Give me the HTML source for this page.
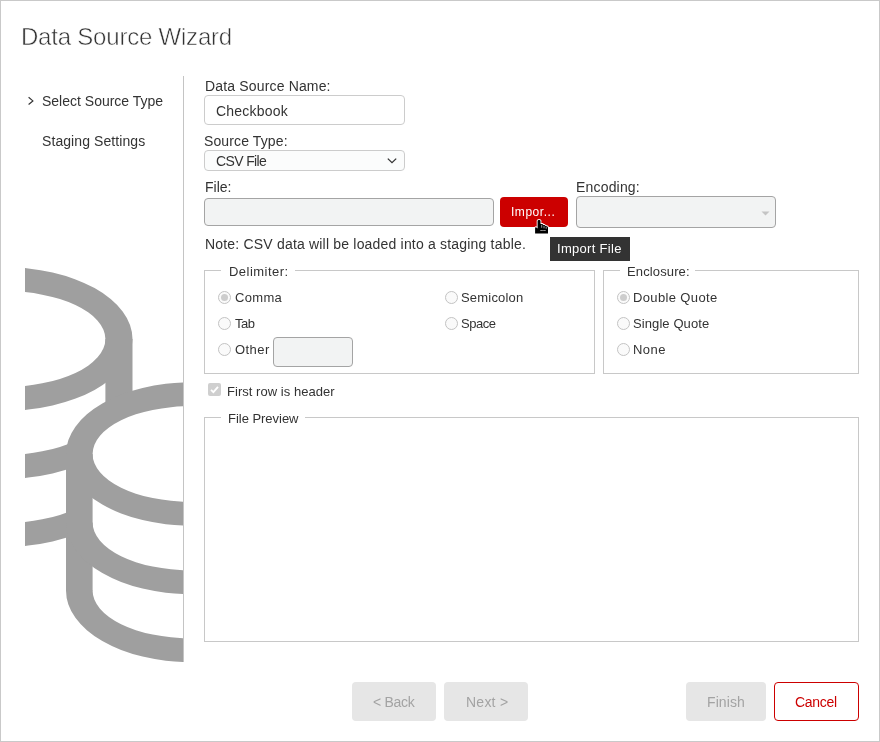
<!DOCTYPE html>
<html lang="en">
<head>
<meta charset="utf-8">
<title>Data Source Wizard</title>
<style>
html,body{margin:0;padding:0;}
body{width:880px;height:742px;position:relative;overflow:hidden;background:#fff;font-family:"Liberation Sans",sans-serif;font-size:14px;color:#333;}
#frame{position:absolute;left:0;top:0;width:878px;height:740px;border:1px solid #c9c9c9;}
.t{position:absolute;white-space:nowrap;line-height:20px;height:20px;will-change:transform;}
.thin{-webkit-text-stroke:0.55px #fff;}
#vline{position:absolute;left:183px;top:76px;width:1px;height:586px;background:#c4c4c4;}
#db{position:absolute;left:25px;top:265px;width:158px;height:397px;}
.box{position:absolute;box-sizing:border-box;border:1px solid #ccc;border-radius:4px;background:#fff;}
.dis{border-color:#a4a4a4;background:#f2f3f3;}
.fs{position:absolute;box-sizing:border-box;border:1px solid #c8c8c8;}
.lg{position:absolute;background:#fff;height:4px;top:-2px;}
.r{position:absolute;box-sizing:border-box;width:13px;height:13px;border-radius:50%;border:1px solid #c3c3c3;background:#fafafa;}
.r.on::after{content:"";position:absolute;left:2px;top:2px;width:7px;height:7px;border-radius:50%;background:#cdcdcd;}
.btn{position:absolute;box-sizing:border-box;border-radius:4px;height:39px;top:682px;}
.btn.d{background:#e6e6e6;}
</style>
</head>
<body>
<div id="frame"></div>
<div class="t thin" style="left:21px;top:27px;font-size:24px;color:#333;letter-spacing:-0.21px;">Data Source Wizard</div>

<!-- sidebar -->
<svg style="position:absolute;left:27px;top:96px" width="8" height="11" viewBox="0 0 8 11"><path d="M1.600 1.300 L5.900 4.900 L1.600 8.500" fill="none" stroke="#333" stroke-width="1.150"/></svg>
<div class="t" style="left:42px;top:91px;font-size:14px;color:#333;">Select Source Type</div>
<div class="t" style="left:42px;top:131px;font-size:14px;color:#333;letter-spacing:0.08px;">Staging Settings</div>
<div id="vline"></div>

<svg id="db" viewBox="25 265 158 397">
  <g fill="#9f9f9f">
    <!-- back cylinder -->
    <path fill-rule="evenodd" d="M-126.5 339 a129.500 72 0 1 0 259 0 a129.500 72 0 1 0 -259 0 Z M-99.400 339 a102.400 48 0 1 0 204.800 0 a102.400 48 0 1 0 -204.800 0 Z"/>
    <rect x="105.400" y="339" width="27.100" height="90"/>
    <path d="M-99.400 407 a102.400 48 0 0 0 204.800 0 h27.100 a129.500 72 0 0 1 -259 0 Z"/>
    <path d="M-99.400 475 a102.400 48 0 0 0 204.800 0 h27.100 a129.500 72 0 0 1 -259 0 Z"/>
  </g>
  <!-- front cylinder silhouette (inset slightly so no seams show) -->
  <path fill="#fff" d="M76 454 a114 61.500 0 0 1 228 0 v136 a114 61.500 0 0 1 -228 0 Z"/>
  <g fill="#9f9f9f">
    <path fill-rule="evenodd" d="M66 454 a124 71.500 0 1 0 248 0 a124 71.500 0 1 0 -248 0 Z M92.600 454 a97.400 47.750 0 1 0 194.800 0 a97.400 47.750 0 1 0 -194.800 0 Z"/>
    <rect x="66" y="454" width="26.600" height="137"/>
    <path d="M92.600 522.500 a97.400 47.750 0 0 0 194.800 0 h26.600 a124 71.500 0 0 1 -248 0 Z"/>
    <path d="M92.600 590.500 a97.400 47.750 0 0 0 194.800 0 h26.600 a124 71.500 0 0 1 -248 0 Z"/>
  </g>
</svg>

<!-- form -->
<div class="t" style="left:205px;top:76px;font-size:14px;color:#333;letter-spacing:0.16px;">Data Source Name:</div>
<div class="box" style="left:204px;top:95px;width:201px;height:30px;"></div>
<div class="t" style="left:216px;top:101px;font-size:14px;color:#333;letter-spacing:0.22px;">Checkbook</div>

<div class="t" style="left:204px;top:131px;font-size:14px;color:#333;letter-spacing:0.12px;">Source Type:</div>
<div class="box" style="left:204px;top:150px;width:201px;height:21px;background:#fbfcfc;"></div>
<div class="t" style="left:216px;top:151px;font-size:14px;color:#333;letter-spacing:-0.63px;">CSV File</div>
<svg style="position:absolute;left:386px;top:156px" width="12" height="9" viewBox="0 0 12 9"><path d="M1.8 2.6 L6 6.6 L10.200 2.600" fill="none" stroke="#333" stroke-width="1.3"/></svg>

<div class="t" style="left:205px;top:177px;font-size:14px;color:#333;letter-spacing:0.01px;">File:</div>
<div class="box dis" style="left:204px;top:198px;width:290px;height:28px;"></div>
<div class="btn" style="left:500px;top:197px;width:68px;height:30px;background:#cc0000;"></div>
<div class="t" style="left:511px;top:202px;font-size:12px;color:#fff;letter-spacing:0.54px;">Impor...</div>
<div class="t" style="left:576px;top:177px;font-size:14px;color:#333;letter-spacing:0.18px;">Encoding:</div>
<div class="box dis" style="left:576px;top:196px;width:200px;height:32px;"></div>
<svg style="position:absolute;left:760.500px;top:211px" width="9" height="5" viewBox="0 0 9 5"><path d="M0.500 0.500 H8.500 L4.500 4.500 Z" fill="#c4c4c4"/></svg>

<div class="t" style="left:205px;top:234px;font-size:14px;color:#333;letter-spacing:0.19px;">Note: CSV data will be loaded into a staging table.</div>

<!-- tooltip -->
<div style="position:absolute;left:550px;top:237px;width:80px;height:24px;background:#333;"></div>
<div class="t" style="left:557px;top:239px;font-size:13px;color:#fff;letter-spacing:0.3px;">Import File</div>

<!-- delimiter fieldset -->
<div class="fs" style="left:204px;top:270px;width:391px;height:104px;"><div class="lg" style="left:16px;width:74px;"></div></div>
<div class="t" style="left:229px;top:262px;font-size:13px;color:#333;letter-spacing:0.47px;">Delimiter:</div>
<div class="r on" style="left:218px;top:291px;"></div><div class="t" style="left:235px;top:288px;font-size:13px;color:#333;letter-spacing:0.32px;">Comma</div>
<div class="r" style="left:218px;top:317px;"></div><div class="t" style="left:235px;top:314px;font-size:13px;color:#333;letter-spacing:-0.5px;">Tab</div>
<div class="r" style="left:218px;top:343px;"></div><div class="t" style="left:235px;top:340px;font-size:13px;color:#333;letter-spacing:0.43px;">Other</div>
<div class="box dis" style="left:273px;top:337px;width:80px;height:30px;"></div>
<div class="r" style="left:445px;top:291px;"></div><div class="t" style="left:461px;top:288px;font-size:13px;color:#333;letter-spacing:0.19px;">Semicolon</div>
<div class="r" style="left:445px;top:317px;"></div><div class="t" style="left:461px;top:314px;font-size:13px;color:#333;letter-spacing:-0.5px;">Space</div>

<!-- enclosure fieldset -->
<div class="fs" style="left:603px;top:270px;width:256px;height:104px;"><div class="lg" style="left:16px;width:75px;"></div></div>
<div class="t" style="left:627px;top:262px;font-size:13px;color:#333;letter-spacing:0.13px;">Enclosure:</div>
<div class="r on" style="left:617px;top:291px;"></div><div class="t" style="left:633px;top:288px;font-size:13px;color:#333;letter-spacing:0.36px;">Double Quote</div>
<div class="r" style="left:617px;top:317px;"></div><div class="t" style="left:633px;top:314px;font-size:13px;color:#333;letter-spacing:0.09px;">Single Quote</div>
<div class="r" style="left:617px;top:343px;"></div><div class="t" style="left:633px;top:340px;font-size:13px;color:#333;letter-spacing:0.43px;">None</div>

<!-- checkbox -->
<div style="position:absolute;left:208px;top:383px;width:13px;height:13px;border-radius:2px;background:#cfcfcf;"></div>
<svg style="position:absolute;left:208px;top:383px" width="13" height="13" viewBox="0 0 13 13"><path d="M3 6.800 L5.400 9.200 L10 3.800" fill="none" stroke="#fff" stroke-width="1.8"/></svg>
<div class="t" style="left:227px;top:382px;font-size:13px;color:#333;letter-spacing:0.04px;">First row is header</div>

<!-- file preview -->
<div class="fs" style="left:204px;top:417px;width:655px;height:225px;"><div class="lg" style="left:16px;width:84px;"></div></div>
<div class="t" style="left:228px;top:409px;font-size:13px;color:#333;letter-spacing:-0.03px;">File Preview</div>

<!-- buttons -->
<div class="btn d" style="left:352px;width:84px;"></div><div class="t" style="left:373px;top:692px;font-size:14px;color:#a3a3a3;letter-spacing:-0.3px;">&lt; Back</div>
<div class="btn d" style="left:444px;width:84px;"></div><div class="t" style="left:466px;top:692px;font-size:14px;color:#a3a3a3;letter-spacing:0.24px;">Next &gt;</div>
<div class="btn d" style="left:686px;width:80px;"></div><div class="t" style="left:707px;top:692px;font-size:14px;color:#a3a3a3;letter-spacing:0.1px;">Finish</div>
<div class="btn" style="left:774px;width:85px;border:1px solid #cc0000;background:#fff;"></div><div class="t" style="left:795px;top:692px;font-size:14px;color:#cc0000;letter-spacing:-0.3px;">Cancel</div>

<!-- cursor -->
<svg style="position:absolute;left:533px;top:218px" width="17" height="18" viewBox="0 0 17 18"><path d="M4.600 2.900 C4.600 1.700 7.500 1.700 7.500 2.900 L7.500 6 L9.300 6 Q10 6.100 10 6.900 L11.600 7 Q12.300 7.200 12.300 8 L13.800 8.200 Q15 8.400 15 9.600 L15 15.400 L2.100 15.400 L2.100 10 Q2.100 9.100 3.100 9.300 L4.600 10.600 Z" fill="#000" stroke="#fff" stroke-width="1.800" stroke-linejoin="round" paint-order="stroke"/><path d="M7.500 12.500 h5" stroke="#fff" stroke-width="0.800" stroke-dasharray="1.200 0.700"/><path d="M8.700 6.800 V9.800 M11 7.800 V10.300 M13.200 8.900 V10.800" stroke="#fff" stroke-width="0.600"/></svg>
</body>
</html>
